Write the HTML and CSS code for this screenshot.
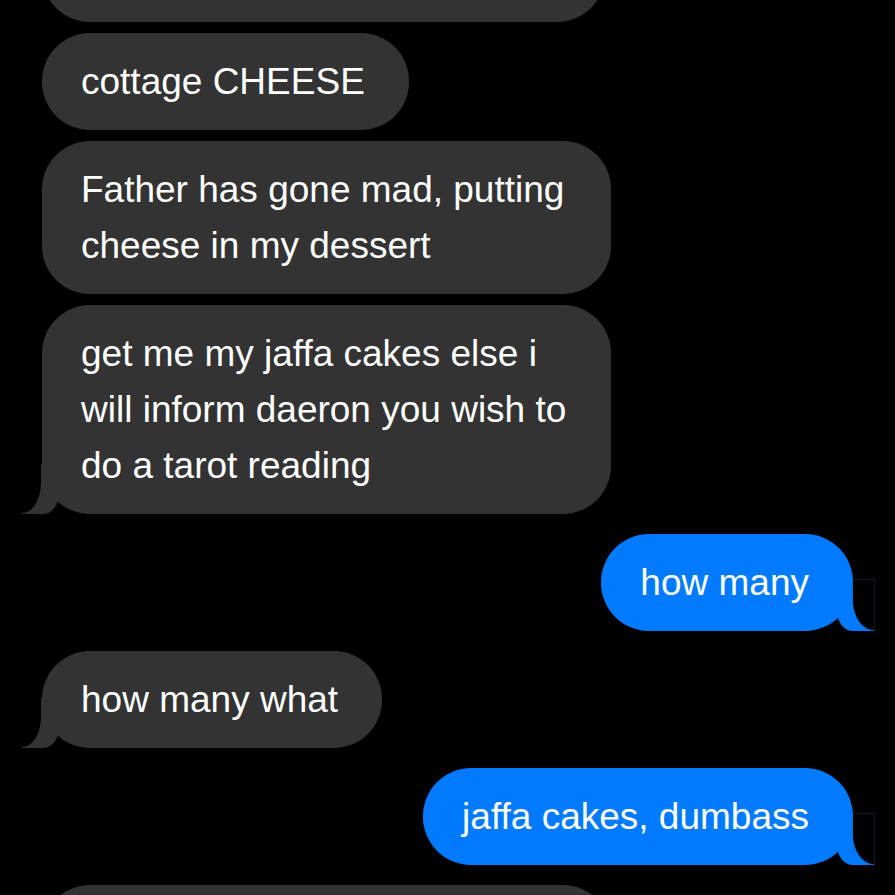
FILE: index.html
```html
<!DOCTYPE html>
<html lang="en">
<head>
<meta charset="utf-8">
<title>Messages</title>
<link rel="stylesheet" href="styles.css">
</head>
<body>
<div class="chat">
  <p class="msg them first">it's not even normal cheese!!!</p>
  <p class="msg them">cottage CHEESE</p>
  <p class="msg them">Father has gone mad, putting cheese in my dessert</p>
  <p class="msg them tail">get me my jaffa cakes else i will inform daeron you wish to do a tarot reading</p>
  <p class="msg me tail">how many</p>
  <p class="msg them tail">how many what</p>
  <p class="msg me tail">jaffa cakes, dumbass</p>
  <p class="msg them">you know very well how many, at least twelve of them</p>
</div>
</body>
</html>
```
FILE: styles.css
```css
html, body {
  margin: 0;
  padding: 0;
  background: #000;
}
body {
  width: 895px;
  height: 895px;
  overflow: hidden;
  font-family: "Liberation Sans", Arial, sans-serif;
}
.chat {
  display: flex;
  flex-direction: column;
  padding: 0 42px;
}
.msg {
  position: relative;
  box-sizing: border-box;
  width: fit-content;
  max-width: 569px;
  margin: 11px 0 0;
  padding: 20.5px 44px 20.5px 39px;
  border-radius: 48px;
  font-size: 37px;
  line-height: 56px;
  color: #fff;
}
.msg.first {
  margin-top: -75px;
}
.msg.tail + .msg {
  margin-top: 20px;
}
.them {
  align-self: flex-start;
  background: #333333;
}
.me {
  align-self: flex-end;
  background: #007aff;
}
.tail::before,
.tail::after {
  content: "";
  position: absolute;
  bottom: 0;
  height: 50px;
}
.them.tail::before {
  left: -20px;
  width: 37px;
  background: #333333;
  border-bottom-right-radius: 16px 20px;
}
.them.tail::after {
  left: -30px;
  bottom: 1px;
  width: 29px;
  background: #000;
  border-bottom-right-radius: 19px 30px;
}
.me.tail::before {
  right: -21px;
  width: 37px;
  background: #007aff;
  border-bottom-left-radius: 16px 20px;
}
.me.tail::after {
  right: -21px;
  bottom: 1px;
  width: 21px;
  background: #000;
  border-bottom-left-radius: 21px 30px;
  box-shadow: 0 0 0 1px rgba(40, 70, 110, 0.35);
}
```
